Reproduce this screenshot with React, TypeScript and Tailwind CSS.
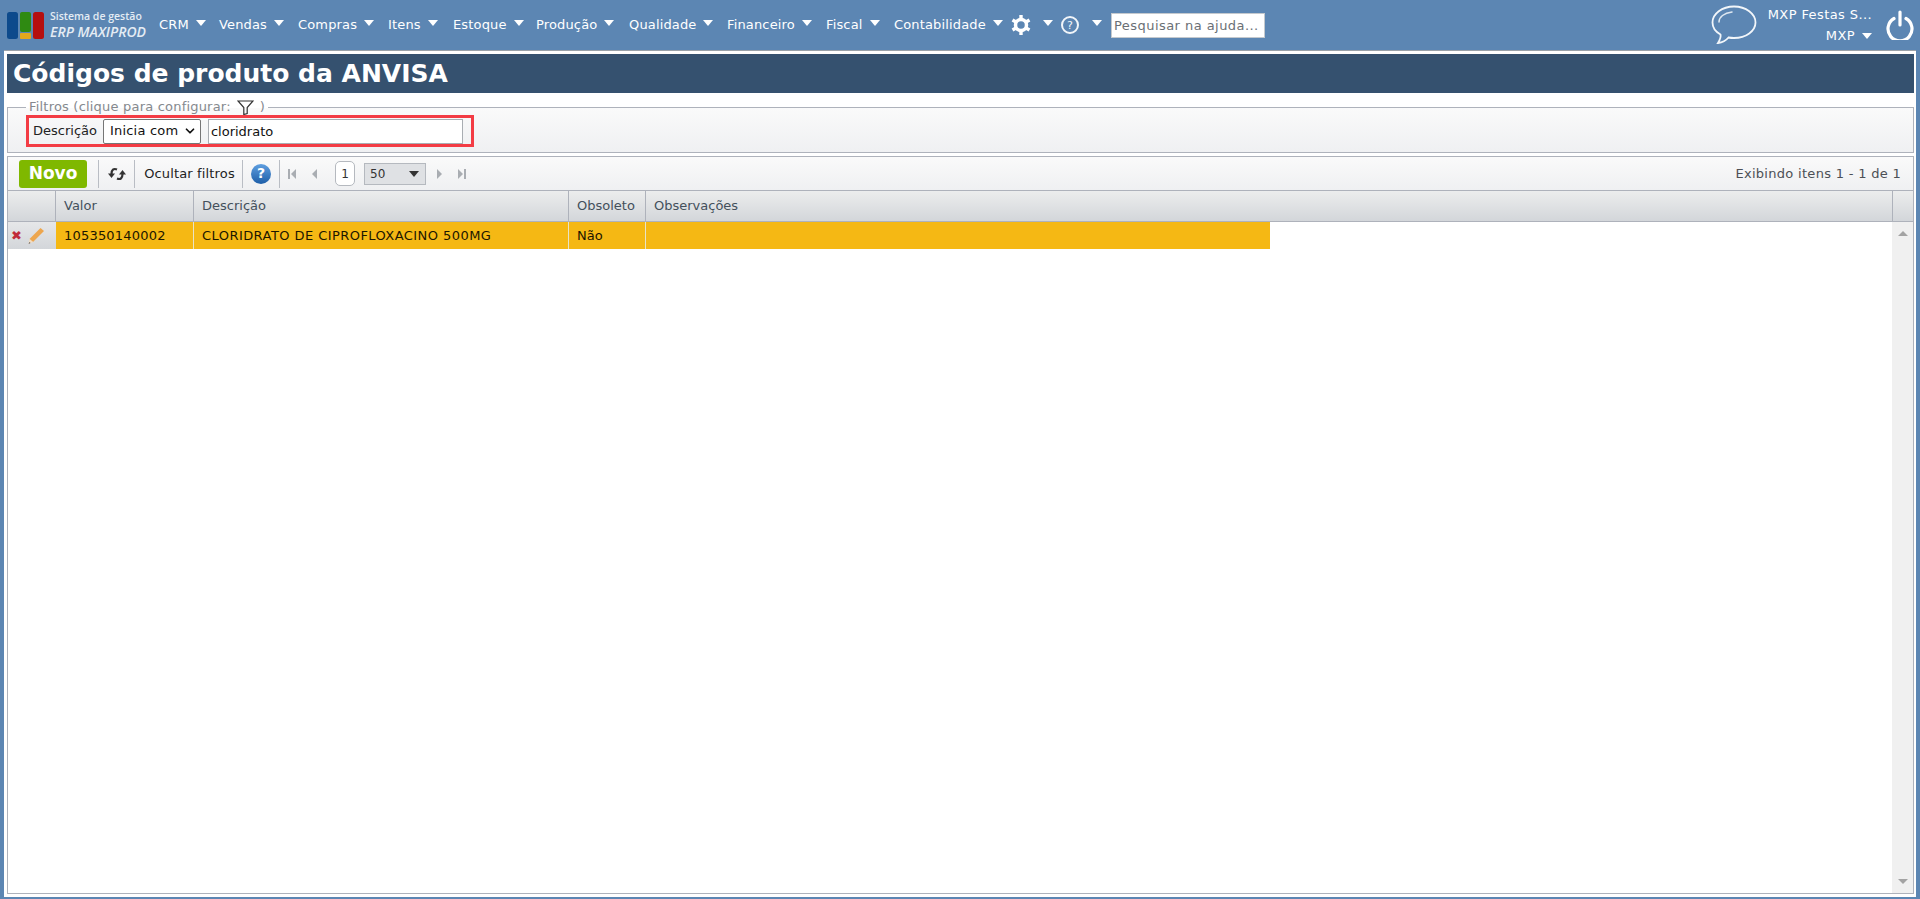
import { ChevronDown } from 'lucide-react';

const font = "font-['DejaVu_Sans',Verdana,sans-serif]";

const menus = [
  { name: 'CRM', width: 'w-[60px]' },
  { name: 'Vendas', width: 'w-[79px]' },
  { name: 'Compras', width: 'w-[90px]' },
  { name: 'Itens', width: 'w-[65px]' },
  { name: 'Estoque', width: 'w-[83px]' },
  { name: 'Produção', width: 'w-[93px]' },
  { name: 'Qualidade', width: 'w-[98px]' },
  { name: 'Financeiro', width: 'w-[99px]' },
  { name: 'Fiscal', width: 'w-[68px]' },
  { name: 'Contabilidade', width: 'w-[117px]' },
];

function Caret({ className = 'border-t-white' }: { className?: string }) {
  return <span className={`inline-block h-0 w-0 border-x-[5px] border-t-[6px] border-x-transparent ${className}`} />;
}

function Logo() {
  return (
    <svg width="37" height="27" viewBox="0 0 37 27" className="shrink-0">
      <rect x="0" y="0" width="11" height="27" rx="2.500" fill="#0d4a8c" />
      <rect x="13" y="0" width="11" height="20" rx="2" fill="#2f8a12" />
      <rect x="13" y="21" width="11" height="6" rx="1" fill="#e3a81c" />
      <rect x="26" y="0" width="11" height="27" rx="2.500" fill="#b50f0f" />
    </svg>
  );
}

function Gear() {
  return (
    <svg width="20" height="22" viewBox="0 0 20 22">
      <circle cx="10" cy="11" r="5.500" fill="none" stroke="#fff" strokeWidth="3.500" />
      <path d="M10 1v4M10 17v4M1.500 6l3.500 2M15 14l3.500 2M1.500 16l3.500-2M15 8l3.500-2" stroke="#fff" strokeWidth="3.400" />
    </svg>
  );
}

function HelpRing() {
  return (
    <span className="flex h-[18px] w-[18px] items-center justify-center rounded-full border-2 border-[#f1f5f9] text-[11px] leading-none text-[#f1f5f9]">
      ?
    </span>
  );
}

function Bubble() {
  return (
    <svg width="46" height="40" viewBox="0 0 46 40" fill="none">
      <path
        d="M23 1.500C11 1.500 1.500 9 1.500 17.500c0 5 3.500 9.500 8 12 .8 3-1 6-2.500 8.500 4-.5 8-2.500 10.500-5.500 2 .4 3.500.5 5.500.5 12 0 21.500-7 21.500-15.500S35 1.500 23 1.500z"
        stroke="#f2f6fa"
        strokeWidth="1.800"
      />
      <path d="M8 17c0-5 5-9 13-10" stroke="#dfe8f1" strokeWidth="1.500" strokeLinecap="round" />
    </svg>
  );
}

function Power() {
  return (
    <svg width="28" height="30" viewBox="0 0 28 30" fill="none" stroke="#fff" strokeWidth="3.200" strokeLinecap="round">
      <path d="M8 8.500a12 12 0 1 0 12 0" />
      <path d="M14 2v13" />
    </svg>
  );
}

function Funnel() {
  return (
    <svg width="17" height="15" viewBox="0 0 17 15" fill="none" stroke="#333" strokeWidth="1.200">
      <path d="M1 1h15l-5.800 6.500v6l-3.400 1v-7z" />
    </svg>
  );
}

function Refresh() {
  return (
    <svg width="18" height="14" viewBox="0 0 18 14">
      <path d="M9 2.500C5.500 1 3.500 3 3.500 7" fill="none" stroke="#333" strokeWidth="2.200" />
      <path d="M0 6.500h7L3.500 11z" fill="#333" />
      <path d="M9 11.500c3.500 1.500 5.500-.5 5.500-4.500" fill="none" stroke="#333" strokeWidth="2.200" />
      <path d="M11 7.500h7L14.500 3z" fill="#333" />
    </svg>
  );
}

function PagerIcon({ dir, bar }: { dir: 'left' | 'right'; bar?: boolean }) {
  return (
    <svg width="10" height="10" viewBox="0 0 10 10" fill="#a9adb2">
      {dir === 'left' ? <path d="M8 0v10L3 5z" /> : <path d="M2 0v10l5-5z" />}
      {bar && (dir === 'left' ? <rect x="0" y="0" width="2" height="10" /> : <rect x="8" y="0" width="2" height="10" />)}
    </svg>
  );
}

function Pencil() {
  return (
    <svg width="18" height="18" viewBox="0 0 18 18">
      <path d="M13.500 1l3.500 3L6 15l-3.500-3z" fill="#eda64e" />
      <path d="M2.500 12L6 15l-4.500 2z" fill="#f3dcc0" />
      <path d="M1.500 17l1-2 1 1z" fill="#555" />
    </svg>
  );
}

const headerCell = 'flex h-full items-center border-r border-[#aeb2bb] pl-2 text-[13px] text-[#44505c]';
const rowCell = 'flex h-full items-center border-r border-[#e8e3c8] pl-2 text-[13px] text-[#1c1600]';

export default function App() {
  return (
    <div className={`flex h-[899px] w-[1920px] flex-col overflow-hidden bg-[#5c86b3] ${font}`}>
      <header className="flex h-[50px] shrink-0 items-center pl-[7px] pr-[6px] text-white">
        <Logo />
        <div className="ml-[6px] flex w-[96px] flex-col font-['Open_Sans',sans-serif] leading-none text-[#e4ecf4]">
          <span className="text-[10.500px] font-semibold whitespace-nowrap">Sistema de gestão</span>
          <span className="mt-[3px] text-[14px] font-semibold italic whitespace-nowrap">ERP MAXIPROD</span>
        </div>
        <nav className="ml-[13px] flex items-center text-[13px] tracking-[0.15px]">
          {menus.map((m) => (
            <div key={m.name} className={`flex items-center gap-[7px] ${m.width}`}>
              <span>{m.name}</span>
              <Caret className="mb-[4px] border-t-white" />
            </div>
          ))}
        </nav>
        <div className="flex items-center">
          <Gear />
          <Caret className="mb-[4px] ml-[12px] border-t-white" />
          <span className="ml-[8px]"><HelpRing /></span>
          <Caret className="mb-[4px] ml-[13px] border-t-white" />
        </div>
        <input
          readOnly
          placeholder="Pesquisar na ajuda..."
          className="ml-[9px] h-[25px] w-[154px] border border-[#c4c9ce] bg-white pl-[2px] text-[13px] tracking-[0.45px] placeholder:text-[#6a6f75]"
        />
        <div className="ml-auto flex items-center">
          <Bubble />
          <div className="ml-[11px] flex flex-col items-end text-[13px] leading-[21px] tracking-[0.4px]">
            <span>MXP Festas S...</span>
            <span className="flex items-center gap-[7px]">MXP <Caret className="border-t-white" /></span>
          </div>
          <span className="ml-[14px]"><Power /></span>
        </div>
      </header>

      <main className="mb-[2px] ml-[4px] mr-[4px] flex min-h-0 flex-1 flex-col border-t border-[#9aa1a9] bg-white pb-[3px] pl-[3px] pr-[2px] pt-[3px]">
        <h1 className="flex h-[39px] shrink-0 items-center bg-[#35516f] pl-[6px] text-[25px] font-bold text-white">
          Códigos de produto da ANVISA
        </h1>

        <fieldset className="mt-[6px] h-[54px] shrink-0 border border-[#aeb2bb] bg-gradient-to-b from-[#fafafa] to-[#eff0f2] pl-[18px]">
          <legend className="flex h-[16px] items-center gap-[6px] px-[3px] text-[13px] tracking-[0.2px] text-[#85898e]">
            Filtros (clique para configurar: <Funnel /> )
          </legend>
          <div className="flex h-[32px] w-[448px] items-center border-[3px] border-[#f33c44] pl-[4px]">
            <span className="text-[13px] text-[#222]">Descrição</span>
            <span className="ml-[6px] flex h-[25px] w-[98px] items-center justify-between rounded-[2px] border border-[#767676] bg-white pl-[6px] pr-[3px] text-[13px] tracking-[0.2px] text-[#111]">
              Inicia com
              <ChevronDown size={14} strokeWidth={3} />
            </span>
            <input
              readOnly
              value="cloridrato"
              className="ml-[7px] h-[25px] w-[255px] border border-[#a9adb2] bg-white pl-[2px] text-[13px] text-[#111]"
            />
          </div>
        </fieldset>

        <div className="mt-[3px] flex min-h-0 flex-1 flex-col border border-[#aeb2bb]">
          <div className="flex h-[33px] shrink-0 items-center bg-gradient-to-b from-[#fafafa] to-[#eff0f2] pr-[12px]">
            <button className="ml-[11px] flex h-[28px] w-[68px] items-center justify-center rounded-[3px] bg-[#7fb800] text-[17px] font-bold text-white">
              Novo
            </button>
            <div className="ml-[11px] flex h-[28px] w-[37px] items-center justify-center border-x border-[#b9bdc4]">
              <Refresh />
            </div>
            <div className="flex h-[28px] w-[108px] items-center justify-center border-r border-[#b9bdc4] pl-[2px] text-[13px] tracking-[0.15px] text-[#222]">
              Ocultar filtros
            </div>
            <div className="flex h-[28px] w-[37px] items-center justify-center border-r border-[#b9bdc4]">
              <span className="flex h-[20px] w-[20px] items-center justify-center rounded-full bg-gradient-to-b from-[#5f9fe0] to-[#1c5ea8] text-[14px] font-bold text-white">?</span>
            </div>
            <span className="ml-[8px]"><PagerIcon dir="left" bar /></span>
            <span className="ml-[11px]"><PagerIcon dir="left" /></span>
            <span className="ml-[16px] flex h-[25px] w-[20px] items-center justify-center rounded-[5px] border border-[#b5b9bf] bg-white text-[12px] text-[#333]">1</span>
            <span className="ml-[9px] flex h-[22px] w-[62px] items-center justify-between border border-[#b5b9bf] bg-[#dfe1e4] pl-[5px] pr-[6px] text-[12px] text-[#333]">
              50 <Caret className="border-t-[#333]" />
            </span>
            <span className="ml-[9px]"><PagerIcon dir="right" /></span>
            <span className="ml-[11px]"><PagerIcon dir="right" bar /></span>
            <span className="ml-auto text-[13px] tracking-[0.3px] text-[#4c5055]">Exibindo itens 1 - 1 de 1</span>
          </div>

          <div className="flex h-[32px] shrink-0 items-center border-y border-[#aeb2bb] bg-gradient-to-b from-[#eceded] to-[#d3d6da]">
            <div className={`${headerCell} w-[48px]`} />
            <div className={`${headerCell} w-[138px]`}>Valor</div>
            <div className={`${headerCell} w-[375px]`}>Descrição</div>
            <div className={`${headerCell} w-[77px]`}>Obsoleto</div>
            <div className={`${headerCell} flex-1`}>Observações</div>
            <div className="w-[20px]" />
          </div>

          <div className="relative flex min-h-0 flex-1">
            <div className="flex-1">
              <div className="flex h-[27px]">
                <div className="flex h-full w-[48px] items-center bg-gradient-to-b from-[#e6e7e9] to-[#d3d6da] pl-[3px]">
                  <span className="w-[16px] text-[13px] font-bold leading-none text-[#c02c3a]">✖</span>
                  <Pencil />
                </div>
                <div className="flex h-full w-[1214px] items-center bg-[#f5b814]">
                  <div className={`${rowCell} w-[138px] tracking-[0.2px]`}>105350140002</div>
                  <div className={`${rowCell} w-[375px] tracking-[0.44px]`}>CLORIDRATO DE CIPROFLOXACINO 500MG</div>
                  <div className={`${rowCell} w-[77px]`}>Não</div>
                  <div className="flex-1" />
                </div>
              </div>
            </div>
            <div className="flex w-[21px] shrink-0 flex-col items-center justify-between bg-[#f0f0f0] py-[9px]">
              <span className="h-0 w-0 border-x-[5px] border-b-[5px] border-x-transparent border-b-[#a3a3a3]" />
              <span className="h-0 w-0 border-x-[5px] border-t-[5px] border-x-transparent border-t-[#a3a3a3]" />
            </div>
          </div>
        </div>
      </main>
    </div>
  );
}
